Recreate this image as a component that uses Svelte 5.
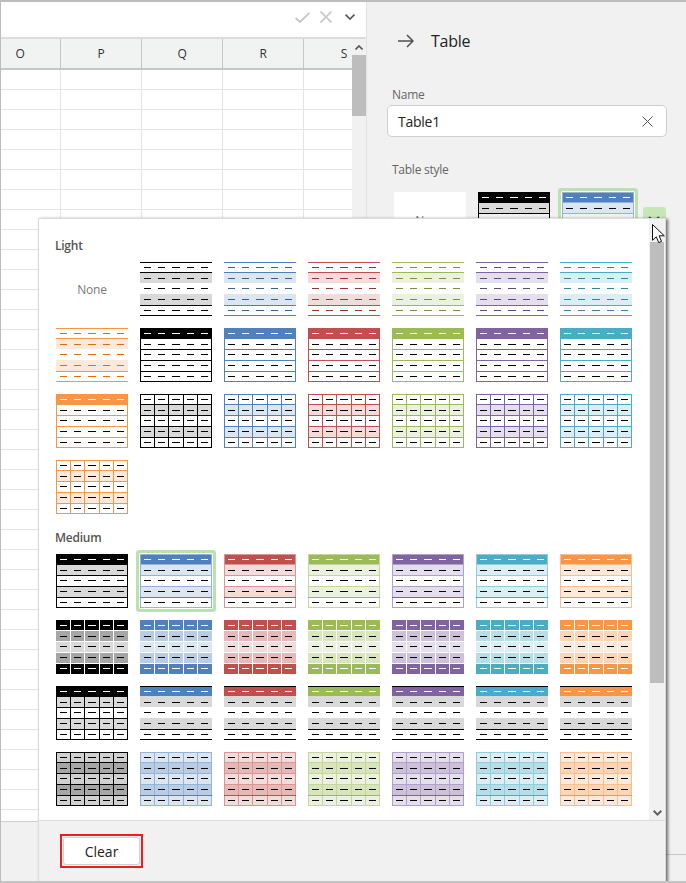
<script>
	const palette = {
		black: { base: '#000000', pale: '#d9d9d9', mid: '#a6a6a6', line: '#000000', deep: '#000000' },
		blue: { base: '#4f81bd', pale: '#dce6f1', mid: '#b8cce4', line: '#95b3d7', deep: '#366092' },
		red: { base: '#c0504d', pale: '#f2dcdb', mid: '#e6b8b7', line: '#da9694', deep: '#963634' },
		green: { base: '#9bbb59', pale: '#ebf1de', mid: '#d8e4bc', line: '#c4d79b', deep: '#76933c' },
		purple: { base: '#8064a2', pale: '#e4dfec', mid: '#ccc0da', line: '#b1a0c7', deep: '#60497a' },
		teal: { base: '#4bacc6', pale: '#daeef3', mid: '#b7dee8', line: '#92cddc', deep: '#31869b' },
		orange: { base: '#f79646', pale: '#fde9d9', mid: '#fcd5b4', line: '#fabf8f', deep: '#e26b0a' }
	};
	const colors = Object.keys(palette);

	const lines = [0, 10, 21, 32, 43, 53];
	const verticals = [14, 28, 43, 57];
	const dashes = [[4, 7], [18, 7], [32, 8], [47, 7], [61, 7]];
	const dashY = [5, 16, 26, 37, 48];

	const rowFill = (i, fill) => [0, lines[i], 72, lines[i + 1] - lines[i], fill];
	const hLine = (y, fill) => [0, y, 72, 1, fill];
	const vLine = (x, fill) => [x, 0, 1, 54, fill];
	const frame = (fill) => [hLine(0, fill), hLine(53, fill), vLine(0, fill), vLine(71, fill)];
	const inner = (fill) => [10, 21, 32, 43].map((y) => hLine(y, fill));
	const cols = (fill) => verticals.map((x) => vLine(x, fill));

	function build(kind, name) {
		const c = palette[name];
		const black = name === 'black';
		let rects = [];
		let ink = ['#000', '#000', '#000', '#000', '#000'];

		if (kind === 'L1') {
			rects = [rowFill(1, c.pale), rowFill(3, c.pale), hLine(0, c.base), hLine(10, c.base), hLine(43, c.base), hLine(53, c.base)];
			ink = ink.map(() => c.deep);
		} else if (kind === 'L2') {
			rects = [rowFill(0, c.base), ...inner(c.base), ...frame(c.base)];
			ink[0] = '#fff';
		} else if (kind === 'L3') {
			rects = [rowFill(1, c.pale), rowFill(3, c.pale), ...inner(c.base), ...cols(c.base), ...frame(c.base)];
		} else if (kind === 'M1') {
			rects = [rowFill(0, c.base), rowFill(1, c.pale), rowFill(3, c.pale), ...inner(c.line), ...frame(c.line), hLine(43, c.base)];
			ink[0] = '#fff';
		} else if (kind === 'M2') {
			rects = [
				rowFill(0, c.base), rowFill(1, c.mid), rowFill(2, c.pale), rowFill(3, c.mid), [0, 43, 72, 11, c.base],
				...inner('#fff'), ...cols('#fff')
			];
			ink[0] = '#fff';
			ink[4] = '#fff';
		} else if (kind === 'M3') {
			if (black) {
				rects = [rowFill(1, c.pale), rowFill(3, c.pale), ...inner('#000'), ...cols('#000'), ...frame('#000'), rowFill(0, '#000')];
			} else {
				rects = [rowFill(0, c.base), rowFill(1, palette.black.pale), rowFill(3, palette.black.pale), hLine(0, '#000'), hLine(43, '#000'), hLine(53, '#000')];
			}
			ink[0] = '#fff';
		} else if (kind === 'M4') {
			const pale = black ? '#d0d0d0' : c.pale;
			rects = [[0, 0, 72, 54, pale], rowFill(1, c.mid), rowFill(3, c.mid), ...inner(c.line), ...cols(c.line), ...frame(c.line), hLine(43, c.base)];
		}
		return { rects, ink };
	}

	const series = (kind) => colors.map((name) => ({ kind, name }));
	const light = [{ kind: 'none' }, ...series('L1'), ...series('L2'), ...series('L3')];
	const medium = [...series('M1'), ...series('M2'), ...series('M3'), ...series('M4')];
	const selected = (item) => item.kind === 'M1' && item.name === 'blue';

	const headers = ['O', 'P', 'Q', 'R', 'S'];
	const rows = Array.from({ length: 38 }, (_, i) => i);
</script>

{#snippet thumb(item, active)}
	{#if item.kind === 'none'}
		<div class="thumb none">None</div>
	{:else}
		{@const t = build(item.kind, item.name)}
		<div class="thumb" class:active>
			<svg width="72" height="54" viewBox="0 0 72 54" shape-rendering="crispEdges">
				{#each t.rects as r}
					<rect x={r[0]} y={r[1]} width={r[2]} height={r[3]} fill={r[4]} />
				{/each}
				{#each dashY as y, i}
					{#each dashes as d}
						<rect x={d[0]} {y} width={d[1]} height="1" fill={t.ink[i]} />
					{/each}
				{/each}
			</svg>
		</div>
	{/if}
{/snippet}

<div class="window">
	<section class="sheet">
		<div class="formula">
			<svg width="15" height="11" viewBox="0 0 15 11" fill="none" stroke="#c6c6c6" stroke-width="1.8"><path d="M.6 6l4.4 4L14.4.8" /></svg>
			<svg width="12" height="12" viewBox="0 0 12 12" fill="none" stroke="#c6c6c6" stroke-width="1.6"><path d="M.5.5l11 11M11.500.5l-11 11" /></svg>
			<svg class="chev" width="10" height="6" viewBox="0 0 10 6" fill="none" stroke="#505050" stroke-width="1.6"><path d="M.5.7L5 5l4.500-4.300" /></svg>
		</div>
		<div class="body">
			<div class="cells">
				<div class="row head">
					{#each headers as h}<div class="cell">{h}</div>{/each}
				</div>
				{#each rows as r (r)}
					<div class="row">
						{#each headers as h}<div class="cell"></div>{/each}
					</div>
				{/each}
			</div>
			<div class="vscroll">
				<svg width="8" height="5" viewBox="0 0 8 5" fill="none" stroke="#555" stroke-width="1.600"><path d="M.5 4.500L4 1l3.500 3.500" /></svg>
				<div class="vthumb"></div>
			</div>
		</div>
		<div class="tabs"></div>
	</section>

	<aside class="panel">
		<header class="title">
			<svg width="16" height="14" viewBox="0 0 16 14" fill="none" stroke="#505050" stroke-width="1.500"><path d="M0 7h15M9 1l6 6-6 6" /></svg>
			<span>Table</span>
		</header>
		<div class="label">Name</div>
		<div class="input">
			<span>Table1</span>
			<svg width="11" height="11" viewBox="0 0 11 11" fill="none" stroke="#505050" stroke-width="1"><path d="M.5.5l10 10M10.500.5l-10 10" /></svg>
		</div>
		<div class="label style-label">Table style</div>
		<div class="styles">
			{@render thumb({ kind: 'none' }, false)}
			{@render thumb({ kind: 'M1', name: 'black' }, false)}
			{@render thumb({ kind: 'M1', name: 'blue' }, true)}
			<div class="more">
				<svg width="12" height="6" viewBox="0 0 12 6" fill="none" stroke="#505050" stroke-width="2"><path d="M1 1l5 4 5-4" /></svg>
			</div>
		</div>
		<div class="panel-rule"></div>
	</aside>

	<div class="popup">
		<div class="main">
			<div class="gallery">
				<h4>Light</h4>
				<div class="grid">
					{#each light as item}{@render thumb(item, false)}{/each}
				</div>
				<h4 class="second">Medium</h4>
				<div class="grid">
					{#each medium as item}{@render thumb(item, selected(item))}{/each}
				</div>
			</div>
			<div class="pscroll">
				<div class="pthumb"></div>
				<svg width="9" height="6" viewBox="0 0 9 6" fill="none" stroke="#606060" stroke-width="2"><path d="M.7.8L4.500 4.600 8.300.8" /></svg>
			</div>
		</div>
		<footer>
			<div class="highlight"><button>Clear</button></div>
		</footer>
	</div>

	<svg class="cursor" width="14" height="20" viewBox="0 0 14 20"><path d="M.5.5v15.800l3.800-3.500 2.400 5.800 2.800-1.200-2.400-5.600h5.200z" fill="#fff" stroke="#111" stroke-width="1" /></svg>
</div>

<style>
	:global(body) {
		margin: 0;
		background: #f1f1f1;
	}

	.window {
		position: relative;
		display: flex;
		width: 686px;
		height: 883px;
		box-sizing: border-box;
		overflow: hidden;
		border-top: 2px solid #bdbdbd;
		border-bottom: 2px solid #c4c4c4;
		border-left: 1px solid #bdbdbd;
		font-family: 'Open Sans', 'Noto Sans', sans-serif;
		letter-spacing: -0.25px;
		color: #222;
	}

	/* sheet side */
	.sheet {
		display: flex;
		flex-direction: column;
		width: 366px;
		flex: none;
		background: #fff;
		border-right: 1px solid #e2e2e2;
		box-sizing: border-box;
	}

	.formula {
		display: flex;
		align-items: center;
		justify-content: flex-end;
		height: 37px;
		flex: none;
		box-sizing: border-box;
		padding: 0 11px 5px 0;
		gap: 10px;
		border-bottom: 2px solid #dcdcdc;
	}

	.chev {
		margin-left: 3px;
	}

	.body {
		display: flex;
		height: 782px;
		flex: none;
		overflow: hidden;
	}

	.cells {
		flex: 1;
		min-width: 0;
		overflow: hidden;
	}

	.row {
		display: grid;
		grid-template-columns: repeat(5, 81px);
		height: 20px;
		margin-left: -21px;
		box-sizing: border-box;
		border-bottom: 1px solid #e4e4e4;
	}

	.cell {
		border-right: 1px solid #e4e4e4;
	}

	.row.head {
		height: 31px;
		background: #f1f3f3;
		border-bottom: 2px solid #c4c6c8;
		font-size: 12px;
		line-height: 29px;
		text-align: center;
		color: #333;
	}

	.head .cell {
		border-right-color: #c4c6c8;
	}

	.vscroll {
		position: relative;
		display: flex;
		flex-direction: column;
		align-items: center;
		width: 14px;
		flex: none;
		background: #f1f1f1;
		padding-top: 6px;
	}

	.vthumb {
		width: 14px;
		height: 61px;
		margin-top: 5px;
		background: #bdbdbd;
	}

	.tabs {
		flex: 1;
		background: #f1f1f1;
		border-top: 1px solid #d0d0d0;
	}

	/* right panel */
	.panel {
		flex: 1;
		position: relative;
		background: #f1f1f1;
		padding: 0 0 0 20px;
	}

	.title {
		display: flex;
		align-items: center;
		gap: 17px;
		height: 22px;
		margin: 28px 0 0 11px;
		font-size: 16px;
	}

	.label {
		margin: 35px 0 0 5px;
		font-size: 12px;
		line-height: 16px;
		color: #666;
	}

	.input {
		display: flex;
		align-items: center;
		justify-content: space-between;
		width: 280px;
		height: 32px;
		box-sizing: border-box;
		margin-top: 2px;
		padding: 0 13px 0 10px;
		background: #fff;
		border: 1px solid #cfcfcf;
		border-radius: 5px;
		font-size: 14px;
	}

	.style-label {
		margin-top: 25px;
	}

	.styles {
		display: flex;
		gap: 12px;
		margin: 14px 0 0 7px;
	}

	.styles .none {
		line-height: 58px;
	}

	.more {
		display: flex;
		justify-content: center;
		box-sizing: border-box;
		width: 23px;
		height: 30px;
		margin: 15px 0 0 -3px;
		padding: 9px 2px 0 0;
		background: #c6e6b8;
		border-radius: 3px;
	}

	.panel-rule {
		position: absolute;
		top: 852px;
		left: 298px;
		right: 0;
		height: 1px;
		background: #c8c8c8;
	}

	/* style picker */
	.popup {
		position: absolute;
		left: 37px;
		top: 216px;
		width: 628px;
		height: 665px;
		display: flex;
		flex-direction: column;
		box-sizing: border-box;
		background: #fff;
		border: 1px solid #dcdcdc;
		border-bottom: 0;
		box-shadow: 2px 1px 3px rgba(0, 0, 0, 0.55);
	}

	.main {
		display: flex;
		height: 601px;
		flex: none;
		overflow: hidden;
	}

	.gallery {
		flex: 1;
		padding: 19px 0 0 17px;
		min-width: 0;
	}

	h4 {
		margin: 0 0 8px -1px;
		font-size: 12px;
		line-height: 16px;
		font-weight: 600;
		color: #555;
	}

	h4.second {
		margin-top: 16px;
	}

	.grid {
		display: grid;
		grid-template-columns: repeat(7, 72px);
		grid-auto-rows: 54px;
		gap: 12px;
	}

	.thumb {
		width: 72px;
		height: 54px;
	}

	.thumb svg {
		display: block;
	}

	.thumb.none {
		background: #fff;
		font-size: 12px;
		line-height: 56px;
		text-align: center;
		color: #7a7a7a;
	}

	.styles .thumb.none {
		line-height: 58px;
	}

	.thumb.active {
		border-radius: 1px;
		box-shadow: 0 0 0 1px #fff, 0 0 0 4px #b9e2ae;
	}

	.pscroll {
		position: relative;
		display: flex;
		flex-direction: column;
		align-items: center;
		width: 16px;
		flex: none;
		background: #f1f1f1;
	}

	.pthumb {
		width: 14px;
		height: 441px;
		margin-top: 23px;
		background: #bdbdbd;
	}

	.pscroll svg {
		margin-top: 127px;
	}

	footer {
		flex: 1;
		display: flex;
		align-items: flex-start;
		padding: 13px 0 0 21px;
		background: #f1f1f1;
		border-top: 1px solid #dcdcdc;
	}

	.highlight {
		display: flex;
		padding: 1px;
		border: 2px solid #ed1c24;
	}

	button {
		width: 77px;
		height: 28px;
		padding: 0;
		background: #fff;
		border: 1px solid #d0d0d0;
		border-radius: 3px;
		font-family: inherit;
		font-size: 14px;
		color: #222;
	}

	.cursor {
		position: absolute;
		left: 651px;
		top: 222px;
	}
</style>
